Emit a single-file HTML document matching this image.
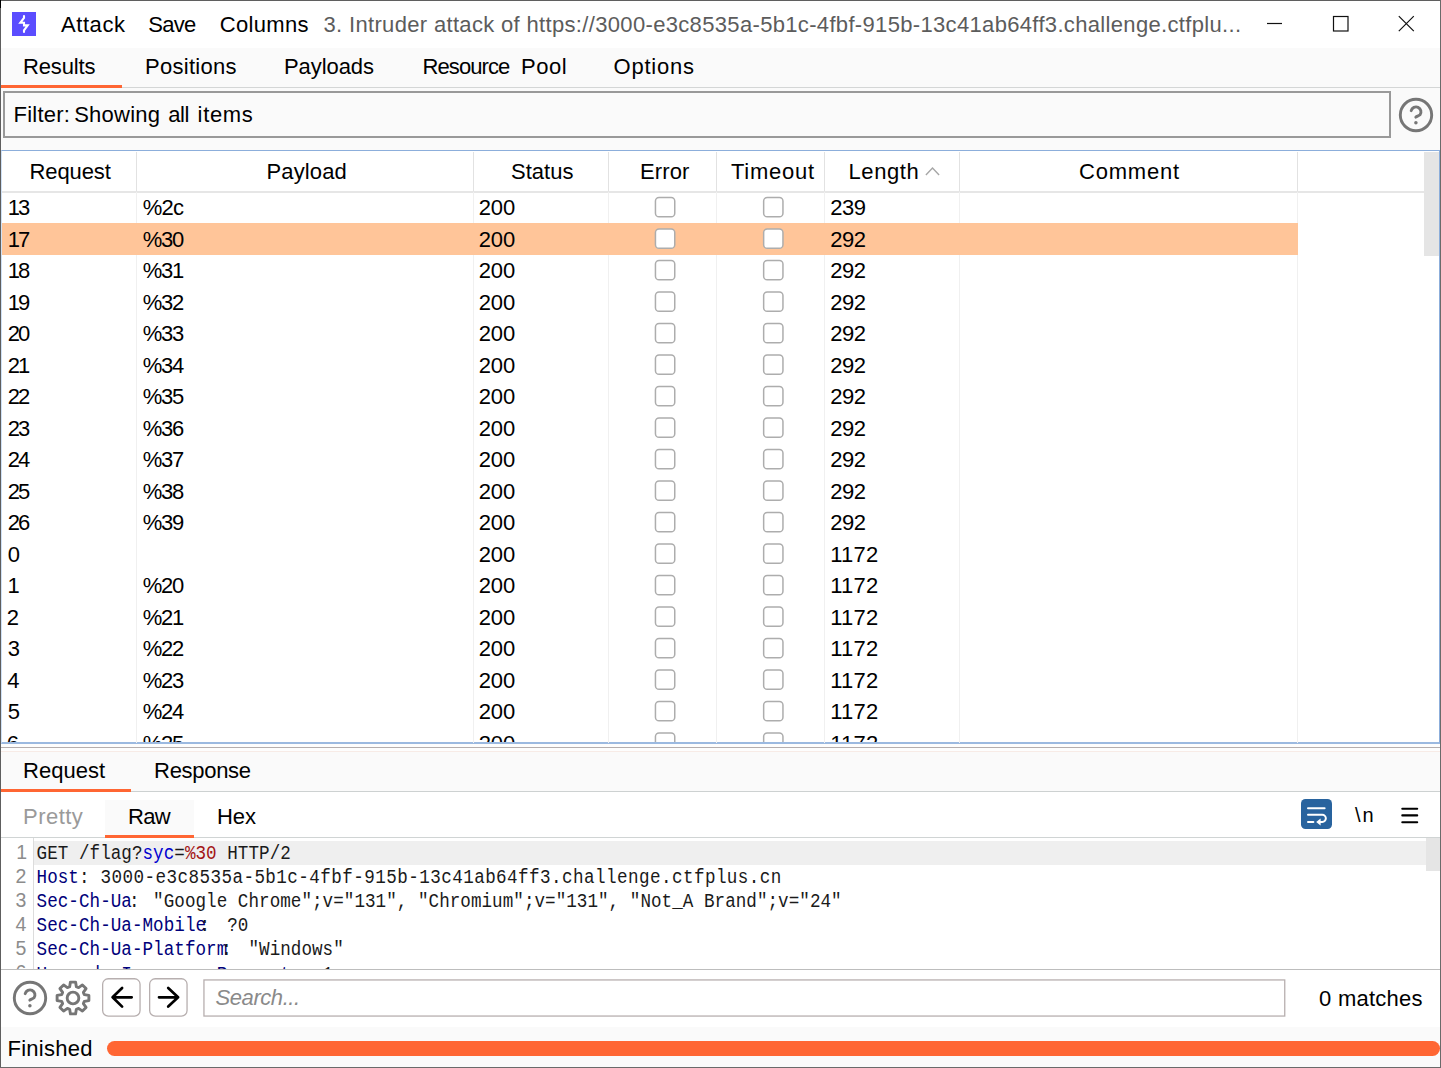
<!DOCTYPE html>
<html lang="en">
<head>
<meta charset="utf-8">
<title>3. Intruder attack</title>
<style>
html,body{margin:0;padding:0;}
body{width:1441px;height:1068px;overflow:hidden;background:#fafafa;position:relative;font-family:"Liberation Sans",sans-serif;color:#000;}
.a{position:absolute;}
.t{position:absolute;white-space:pre;line-height:1;font-family:"Liberation Sans",sans-serif;}
.vl{position:absolute;width:1px;background:#f0f0f0;top:192px;height:551px;}
.hl{position:absolute;width:1px;background:#e2e2e2;top:152px;height:39px;}
.code{position:absolute;left:36.6px;white-space:pre;font-family:"Liberation Mono",monospace;font-size:17.6px;line-height:24px;height:24px;letter-spacing:0.035px;transform:scaleY(1.17);transform-origin:0 18.5px;color:#1a1a1a;}
.code .h{color:#00007a;}
.code .k{color:#0000d0;}
.code .v{color:#a31515;}
.code .w{letter-spacing:0.43px;}
.code .cn{position:relative;}
</style>
</head>
<body>

<div class="a" style="left:0;top:0;width:1441px;height:48px;background:#fff;"></div>
<div class="a" style="left:12px;top:12px;width:24px;height:24px;background:#5b4dff;"><svg width="24" height="24" viewBox="0 0 24 24" style="display:block"><path d="M12 4V5.8L8.3 10.8H12V13.4H15.7L12 18.3V20" fill="none" stroke="#fff" stroke-width="2.1" stroke-linecap="round" stroke-linejoin="miter"/></svg></div>
<svg class="a" style="left:1260px;top:8px" width="170" height="32" viewBox="0 0 170 32"><g stroke="#111" stroke-width="1.2" fill="none"><path d="M7 15.5H22"/><rect x="73.5" y="8.5" width="14.5" height="14.5"/><path d="M138.8 8.2L153.8 23.2M153.8 8.2L138.8 23.2"/></g></svg>
<div class="a" style="left:1px;top:87px;width:1439px;height:1px;background:#d4d6d6;"></div>
<div class="a" style="left:1px;top:85px;width:121px;height:3px;background:#ff6633;"></div>
<div class="a" style="left:3px;top:91px;width:1384px;height:43px;border:2px solid #999;background:#fafafa;"></div>
<svg class="a" style="left:1395.70px;top:94.75px" width="40" height="40" viewBox="-20 -20 40 40"><circle cx="0" cy="0" r="15.7" fill="none" stroke="#767676" stroke-width="2.9"/><path d="M-4.8 -4.3A4.95 4.95 0 1 1 4 -0.2C2.8 1 1 1.2 -0.2 2.1" fill="none" stroke="#767676" stroke-width="2.9" stroke-linecap="round"/><circle cx="-0.1" cy="7.65" r="1.75" fill="#767676"/></svg>
<div class="a" style="left:1px;top:150px;width:1437px;height:591px;background:#fff;border:1px solid #8caedb;border-left-color:#cfe1f6;border-bottom:2px solid #9bb9e0;box-sizing:content-box;"></div>
<div class="a" style="left:2px;top:191px;width:1422px;height:1.5px;background:#e6e6e6;"></div>
<div class="a" style="left:2px;top:223px;width:1296px;height:32px;background:#ffc599;"></div>
<div class="hl" style="left:136px"></div><div class="vl" style="left:136px"></div>
<div class="hl" style="left:473px"></div><div class="vl" style="left:473px"></div>
<div class="hl" style="left:608px"></div><div class="vl" style="left:608px"></div>
<div class="hl" style="left:716px"></div><div class="vl" style="left:716px"></div>
<div class="hl" style="left:824px"></div><div class="vl" style="left:824px"></div>
<div class="hl" style="left:959px"></div><div class="vl" style="left:959px"></div>
<div class="hl" style="left:1297px"></div><div class="vl" style="left:1297px"></div>
<div class="a" style="left:2px;top:223px;width:1296px;height:32px;background:#ffc599;"></div>
<svg class="a" style="left:920px;top:160px" width="24" height="20" viewBox="920 160 24 20"><path d="M925.9 174.9L932.5 168.1L939.1 174.9" fill="none" stroke="#a6a6a6" stroke-width="1.4"/></svg>
<div class="a" style="left:1424px;top:152px;width:15px;height:104px;background:#e5e5e5;"></div>
<div class="a" style="left:2px;top:192px;width:1422px;height:550px;overflow:hidden;"><div class="a" style="left:-2px;top:-192px;width:1441px;height:800px;">
<svg class="a" style="left:0;top:0" width="1441" height="800" viewBox="0 0 1441 800"><g fill="#fff" stroke="#adadad" stroke-width="1.5"><rect x="655.45" y="197.45" width="19.3" height="19.3" rx="3.6"/><rect x="763.65" y="197.45" width="19.3" height="19.3" rx="3.6"/><rect x="655.45" y="228.95" width="19.3" height="19.3" rx="3.6"/><rect x="763.65" y="228.95" width="19.3" height="19.3" rx="3.6"/><rect x="655.45" y="260.45" width="19.3" height="19.3" rx="3.6"/><rect x="763.65" y="260.45" width="19.3" height="19.3" rx="3.6"/><rect x="655.45" y="291.95" width="19.3" height="19.3" rx="3.6"/><rect x="763.65" y="291.95" width="19.3" height="19.3" rx="3.6"/><rect x="655.45" y="323.45" width="19.3" height="19.3" rx="3.6"/><rect x="763.65" y="323.45" width="19.3" height="19.3" rx="3.6"/><rect x="655.45" y="354.95" width="19.3" height="19.3" rx="3.6"/><rect x="763.65" y="354.95" width="19.3" height="19.3" rx="3.6"/><rect x="655.45" y="386.45" width="19.3" height="19.3" rx="3.6"/><rect x="763.65" y="386.45" width="19.3" height="19.3" rx="3.6"/><rect x="655.45" y="417.95" width="19.3" height="19.3" rx="3.6"/><rect x="763.65" y="417.95" width="19.3" height="19.3" rx="3.6"/><rect x="655.45" y="449.45" width="19.3" height="19.3" rx="3.6"/><rect x="763.65" y="449.45" width="19.3" height="19.3" rx="3.6"/><rect x="655.45" y="480.95" width="19.3" height="19.3" rx="3.6"/><rect x="763.65" y="480.95" width="19.3" height="19.3" rx="3.6"/><rect x="655.45" y="512.45" width="19.3" height="19.3" rx="3.6"/><rect x="763.65" y="512.45" width="19.3" height="19.3" rx="3.6"/><rect x="655.45" y="543.95" width="19.3" height="19.3" rx="3.6"/><rect x="763.65" y="543.95" width="19.3" height="19.3" rx="3.6"/><rect x="655.45" y="575.45" width="19.3" height="19.3" rx="3.6"/><rect x="763.65" y="575.45" width="19.3" height="19.3" rx="3.6"/><rect x="655.45" y="606.95" width="19.3" height="19.3" rx="3.6"/><rect x="763.65" y="606.95" width="19.3" height="19.3" rx="3.6"/><rect x="655.45" y="638.45" width="19.3" height="19.3" rx="3.6"/><rect x="763.65" y="638.45" width="19.3" height="19.3" rx="3.6"/><rect x="655.45" y="669.95" width="19.3" height="19.3" rx="3.6"/><rect x="763.65" y="669.95" width="19.3" height="19.3" rx="3.6"/><rect x="655.45" y="701.45" width="19.3" height="19.3" rx="3.6"/><rect x="763.65" y="701.45" width="19.3" height="19.3" rx="3.6"/><rect x="655.45" y="732.95" width="19.3" height="19.3" rx="3.6"/><rect x="763.65" y="732.95" width="19.3" height="19.3" rx="3.6"/></g></svg>
<span class="t c" style="left:7.70px;top:196.50px;font-size:22px;letter-spacing:-1.935px;">13</span>
<span class="t c" style="left:142.80px;top:196.50px;font-size:22px;letter-spacing:-0.798px;">%2c</span>
<span class="t c" style="left:478.70px;top:196.50px;font-size:22px;letter-spacing:-0.085px;">200</span>
<span class="t c" style="left:830.20px;top:196.50px;font-size:22px;letter-spacing:-0.485px;">239</span>
<span class="t c" style="left:7.70px;top:228.50px;font-size:22px;letter-spacing:-1.935px;">17</span>
<span class="t c" style="left:142.80px;top:228.50px;font-size:22px;letter-spacing:-1.298px;">%30</span>
<span class="t c" style="left:478.70px;top:228.50px;font-size:22px;letter-spacing:-0.085px;">200</span>
<span class="t c" style="left:830.20px;top:228.50px;font-size:22px;letter-spacing:-0.485px;">292</span>
<span class="t c" style="left:7.70px;top:259.50px;font-size:22px;letter-spacing:-1.935px;">18</span>
<span class="t c" style="left:142.80px;top:259.50px;font-size:22px;letter-spacing:-1.298px;">%31</span>
<span class="t c" style="left:478.70px;top:259.50px;font-size:22px;letter-spacing:-0.085px;">200</span>
<span class="t c" style="left:830.20px;top:259.50px;font-size:22px;letter-spacing:-0.485px;">292</span>
<span class="t c" style="left:7.70px;top:291.50px;font-size:22px;letter-spacing:-1.935px;">19</span>
<span class="t c" style="left:142.80px;top:291.50px;font-size:22px;letter-spacing:-1.298px;">%32</span>
<span class="t c" style="left:478.70px;top:291.50px;font-size:22px;letter-spacing:-0.085px;">200</span>
<span class="t c" style="left:830.20px;top:291.50px;font-size:22px;letter-spacing:-0.485px;">292</span>
<span class="t c" style="left:7.70px;top:322.50px;font-size:22px;letter-spacing:-1.935px;">20</span>
<span class="t c" style="left:142.80px;top:322.50px;font-size:22px;letter-spacing:-1.298px;">%33</span>
<span class="t c" style="left:478.70px;top:322.50px;font-size:22px;letter-spacing:-0.085px;">200</span>
<span class="t c" style="left:830.20px;top:322.50px;font-size:22px;letter-spacing:-0.485px;">292</span>
<span class="t c" style="left:7.70px;top:354.50px;font-size:22px;letter-spacing:-1.935px;">21</span>
<span class="t c" style="left:142.80px;top:354.50px;font-size:22px;letter-spacing:-1.298px;">%34</span>
<span class="t c" style="left:478.70px;top:354.50px;font-size:22px;letter-spacing:-0.085px;">200</span>
<span class="t c" style="left:830.20px;top:354.50px;font-size:22px;letter-spacing:-0.485px;">292</span>
<span class="t c" style="left:7.70px;top:385.50px;font-size:22px;letter-spacing:-1.935px;">22</span>
<span class="t c" style="left:142.80px;top:385.50px;font-size:22px;letter-spacing:-1.298px;">%35</span>
<span class="t c" style="left:478.70px;top:385.50px;font-size:22px;letter-spacing:-0.085px;">200</span>
<span class="t c" style="left:830.20px;top:385.50px;font-size:22px;letter-spacing:-0.485px;">292</span>
<span class="t c" style="left:7.70px;top:417.50px;font-size:22px;letter-spacing:-1.935px;">23</span>
<span class="t c" style="left:142.80px;top:417.50px;font-size:22px;letter-spacing:-1.298px;">%36</span>
<span class="t c" style="left:478.70px;top:417.50px;font-size:22px;letter-spacing:-0.085px;">200</span>
<span class="t c" style="left:830.20px;top:417.50px;font-size:22px;letter-spacing:-0.485px;">292</span>
<span class="t c" style="left:7.70px;top:448.50px;font-size:22px;letter-spacing:-1.935px;">24</span>
<span class="t c" style="left:142.80px;top:448.50px;font-size:22px;letter-spacing:-1.298px;">%37</span>
<span class="t c" style="left:478.70px;top:448.50px;font-size:22px;letter-spacing:-0.085px;">200</span>
<span class="t c" style="left:830.20px;top:448.50px;font-size:22px;letter-spacing:-0.485px;">292</span>
<span class="t c" style="left:7.70px;top:480.50px;font-size:22px;letter-spacing:-1.935px;">25</span>
<span class="t c" style="left:142.80px;top:480.50px;font-size:22px;letter-spacing:-1.298px;">%38</span>
<span class="t c" style="left:478.70px;top:480.50px;font-size:22px;letter-spacing:-0.085px;">200</span>
<span class="t c" style="left:830.20px;top:480.50px;font-size:22px;letter-spacing:-0.485px;">292</span>
<span class="t c" style="left:7.70px;top:511.50px;font-size:22px;letter-spacing:-1.935px;">26</span>
<span class="t c" style="left:142.80px;top:511.50px;font-size:22px;letter-spacing:-1.298px;">%39</span>
<span class="t c" style="left:478.70px;top:511.50px;font-size:22px;letter-spacing:-0.085px;">200</span>
<span class="t c" style="left:830.20px;top:511.50px;font-size:22px;letter-spacing:-0.485px;">292</span>
<span class="t c" style="left:7.80px;top:543.50px;font-size:22px;">0</span>
<span class="t c" style="left:478.70px;top:543.50px;font-size:22px;letter-spacing:-0.085px;">200</span>
<span class="t c" style="left:830.20px;top:543.50px;font-size:22px;letter-spacing:0.242px;">1172</span>
<span class="t c" style="left:7.60px;top:574.50px;font-size:22px;">1</span>
<span class="t c" style="left:142.80px;top:574.50px;font-size:22px;letter-spacing:-1.298px;">%20</span>
<span class="t c" style="left:478.70px;top:574.50px;font-size:22px;letter-spacing:-0.085px;">200</span>
<span class="t c" style="left:830.20px;top:574.50px;font-size:22px;letter-spacing:0.242px;">1172</span>
<span class="t c" style="left:6.80px;top:606.50px;font-size:22px;">2</span>
<span class="t c" style="left:142.80px;top:606.50px;font-size:22px;letter-spacing:-1.298px;">%21</span>
<span class="t c" style="left:478.70px;top:606.50px;font-size:22px;letter-spacing:-0.085px;">200</span>
<span class="t c" style="left:830.20px;top:606.50px;font-size:22px;letter-spacing:0.242px;">1172</span>
<span class="t c" style="left:7.80px;top:637.50px;font-size:22px;">3</span>
<span class="t c" style="left:142.80px;top:637.50px;font-size:22px;letter-spacing:-1.298px;">%22</span>
<span class="t c" style="left:478.70px;top:637.50px;font-size:22px;letter-spacing:-0.085px;">200</span>
<span class="t c" style="left:830.20px;top:637.50px;font-size:22px;letter-spacing:0.242px;">1172</span>
<span class="t c" style="left:7.20px;top:669.50px;font-size:22px;">4</span>
<span class="t c" style="left:142.80px;top:669.50px;font-size:22px;letter-spacing:-1.298px;">%23</span>
<span class="t c" style="left:478.70px;top:669.50px;font-size:22px;letter-spacing:-0.085px;">200</span>
<span class="t c" style="left:830.20px;top:669.50px;font-size:22px;letter-spacing:0.242px;">1172</span>
<span class="t c" style="left:7.80px;top:700.50px;font-size:22px;">5</span>
<span class="t c" style="left:142.80px;top:700.50px;font-size:22px;letter-spacing:-1.298px;">%24</span>
<span class="t c" style="left:478.70px;top:700.50px;font-size:22px;letter-spacing:-0.085px;">200</span>
<span class="t c" style="left:830.20px;top:700.50px;font-size:22px;letter-spacing:0.242px;">1172</span>
<span class="t c" style="left:6.80px;top:732.50px;font-size:22px;">6</span>
<span class="t c" style="left:142.80px;top:732.50px;font-size:22px;letter-spacing:-1.298px;">%25</span>
<span class="t c" style="left:478.70px;top:732.50px;font-size:22px;letter-spacing:-0.085px;">200</span>
<span class="t c" style="left:830.20px;top:732.50px;font-size:22px;letter-spacing:0.242px;">1172</span>
</div></div>
<span class="t" style="left:61.00px;top:13.50px;font-size:22px;letter-spacing:0.573px;">Attack</span>
<span class="t" style="left:148.30px;top:13.50px;font-size:22px;letter-spacing:-0.736px;">Save</span>
<span class="t" style="left:219.80px;top:13.50px;font-size:22px;letter-spacing:0.315px;">Columns</span>
<span class="t" style="left:323.50px;top:13.50px;font-size:22px;letter-spacing:0.334px;color:#5c5c5c;">3. Intruder attack of https://3000-e3c8535a-5b1c-4fbf-915b-13c41ab64ff3.challenge.ctfplu...</span>
<span class="t" style="left:23.00px;top:55.50px;font-size:22px;letter-spacing:-0.143px;">Results</span>
<span class="t" style="left:145.00px;top:55.50px;font-size:22px;letter-spacing:0.279px;">Positions</span>
<span class="t" style="left:284.00px;top:55.50px;font-size:22px;letter-spacing:-0.072px;">Payloads</span>
<span class="t" style="left:422.60px;top:55.50px;font-size:22px;letter-spacing:-0.931px;">Resource</span>
<span class="t" style="left:521.00px;top:55.50px;font-size:22px;letter-spacing:0.518px;">Pool</span>
<span class="t" style="left:613.50px;top:55.50px;font-size:22px;letter-spacing:0.780px;">Options</span>
<span class="t" style="left:13.50px;top:103.50px;font-size:22px;letter-spacing:0.235px;">Filter:</span>
<span class="t" style="left:74.20px;top:103.50px;font-size:22px;letter-spacing:0.241px;">Showing</span>
<span class="t" style="left:168.20px;top:103.50px;font-size:22px;letter-spacing:-0.362px;">all</span>
<span class="t" style="left:197.60px;top:103.50px;font-size:22px;letter-spacing:0.660px;">items</span>
<span class="t" style="left:29.60px;top:160.50px;font-size:22px;letter-spacing:-0.122px;">Request</span>
<span class="t" style="left:266.50px;top:160.50px;font-size:22px;letter-spacing:0.122px;">Payload</span>
<span class="t" style="left:511.00px;top:160.50px;font-size:22px;letter-spacing:0.026px;">Status</span>
<span class="t" style="left:640.00px;top:160.50px;font-size:22px;letter-spacing:0.110px;">Error</span>
<span class="t" style="left:731.00px;top:160.50px;font-size:22px;letter-spacing:0.743px;">Timeout</span>
<span class="t" style="left:848.50px;top:160.50px;font-size:22px;letter-spacing:0.589px;">Length</span>
<span class="t" style="left:1079.00px;top:160.50px;font-size:22px;letter-spacing:0.792px;">Comment</span>
<div class="a" style="left:1px;top:744px;width:1439px;height:7.5px;background:#fdfdfd;"></div>
<div class="a" style="left:1px;top:747px;width:1439px;height:1px;background:#b4aeae;"></div>
<div class="a" style="left:1px;top:751px;width:1439px;height:1px;background:#f7ebe6;"></div>
<div class="a" style="left:1px;top:791px;width:1439px;height:1px;background:#cdd1d1;"></div>
<div class="a" style="left:1px;top:789px;width:130px;height:3px;background:#ff6633;"></div>
<div class="a" style="left:1px;top:792px;width:1439px;height:46px;background:#fff;"></div>
<div class="a" style="left:105px;top:800px;width:89px;height:38px;background:#fafafa;"></div>
<div class="a" style="left:1px;top:837px;width:1439px;height:1px;background:#d0d4d4;"></div>
<div class="a" style="left:105px;top:835px;width:89px;height:3px;background:#ff6633;"></div>
<svg class="a" style="left:1301px;top:799px" width="31" height="30" viewBox="0 0 31 30"><rect x="0" y="0" width="31" height="30" rx="4.5" fill="#28639e"/><g fill="none" stroke="#fff" stroke-width="2" stroke-linecap="round"><path d="M7 9.2H23.6"/><path d="M7 15.8H21.3a3.55 3.55 0 0 1 0 7.1H18"/><path d="M7 22.9H12.4"/></g><path d="M15.2 22.9L19.6 19.4V26.4Z" fill="#fff"/></svg>
<svg class="a" style="left:1399px;top:804px" width="22" height="22" viewBox="0 0 22 22"><g stroke="#000" stroke-width="2.1" stroke-linecap="round"><path d="M3.3 4.7H18.2M3.3 11.4H18.2M3.3 18.2H18.2"/></g></svg>
<div class="a" style="left:1px;top:838px;width:1439px;height:131px;background:#fff;overflow:hidden;">
<div class="a" style="left:32px;top:3px;width:1393px;height:23.7px;background:#efefef;"></div>
<div class="a" style="left:32px;top:0;width:1px;height:131px;background:#dcdcdc;"></div>
<div class="a" style="left:1424.5px;top:0;width:14.5px;height:33px;background:#e5e5e5;"></div>
</div>
<div class="a" style="left:0;top:838px;width:1424px;height:131px;overflow:hidden;"><div class="a" style="left:0;top:-838px;width:1441px;height:1068px;">
<div class="code" style="top:841.8px">GET /flag?<span class="k">syc</span>=<span class="v">%30</span> HTTP/2</div>
<div class="code" style="top:865.8px"><span class="h">Host</span>:<span class="w"> 3000-e3c8535a-5b1c-4fbf-915b-13c41ab64ff3.challenge.ctfplus.cn</span></div>
<div class="code" style="top:889.8px"><span class="h">Sec-Ch-Ua</span><span class="cn" style="left:-3px">:</span> "Google Chrome";v="131", "Chromium";v="131", "Not_A Brand";v="24"</div>
<div class="code" style="top:913.8px"><span class="h">Sec-Ch-Ua-Mobile</span><span class="cn" style="left:-6.5px">:</span> ?0</div>
<div class="code" style="top:937.8px"><span class="h">Sec-Ch-Ua-Platform</span><span class="cn" style="left:-6px">:</span> "Windows"</div>
<div class="code" style="top:963.0px"><span class="h">Upgrade-Insecure-Requests</span><span class="cn" style="left:-4px">:</span> 1</div>
<span class="t ln" style="left:16.30px;top:842.65px;font-size:19.5px;color:#8c8c8c;">1</span>
<span class="t ln" style="left:15.50px;top:866.65px;font-size:19.5px;color:#8c8c8c;">2</span>
<span class="t ln" style="left:15.50px;top:890.65px;font-size:19.5px;color:#8c8c8c;">3</span>
<span class="t ln" style="left:15.50px;top:914.65px;font-size:19.5px;color:#8c8c8c;">4</span>
<span class="t ln" style="left:15.50px;top:938.65px;font-size:19.5px;color:#8c8c8c;">5</span>
<span class="t ln" style="left:15.50px;top:962.65px;font-size:19.5px;color:#8c8c8c;">6</span>
</div></div>
<div class="a" style="left:1px;top:969px;width:1439px;height:58px;background:#fff;"></div>
<div class="a" style="left:1px;top:969px;width:1439px;height:1px;background:#bdbdbd;"></div>
<svg class="a" style="left:9.65px;top:977.95px" width="40" height="40" viewBox="-20 -20 40 40"><circle cx="0" cy="0" r="15.7" fill="none" stroke="#767676" stroke-width="2.9"/><path d="M-4.8 -4.3A4.95 4.95 0 1 1 4 -0.2C2.8 1 1 1.2 -0.2 2.1" fill="none" stroke="#767676" stroke-width="2.9" stroke-linecap="round"/><circle cx="-0.1" cy="7.65" r="1.75" fill="#767676"/></svg>
<svg class="a" style="left:53px;top:978.10px" width="40" height="40" viewBox="-20 -20 40 40"><path d="M-3.35 -11.31L-2.57 -15.89L2.57 -15.89L3.35 -11.31L5.63 -10.37L9.42 -13.06L13.06 -9.42L10.37 -5.63L11.31 -3.35L15.89 -2.57L15.89 2.57L11.31 3.35L10.37 5.63L13.06 9.42L9.42 13.06L5.63 10.37L3.35 11.31L2.57 15.89L-2.57 15.89L-3.35 11.31L-5.63 10.37L-9.42 13.06L-13.06 9.42L-10.37 5.63L-11.31 3.35L-15.89 2.57L-15.89 -2.57L-11.31 -3.35L-10.37 -5.63L-13.06 -9.42L-9.42 -13.06L-5.63 -10.37Z" fill="none" stroke="#767676" stroke-width="2.9" stroke-linejoin="round"/><circle cx="0" cy="0" r="5.85" fill="none" stroke="#767676" stroke-width="2.9"/></svg>
<svg class="a" style="left:100.1px;top:976px" width="44" height="44" viewBox="-2 -2.1 44 44"><rect x="0.65" y="0.65" width="37.4" height="37.4" rx="5.6" fill="#fff" stroke="#b7afaf" stroke-width="1.3"/></svg>
<svg class="a" style="left:147.2px;top:976px" width="44" height="44" viewBox="-2 -2.1 44 44"><rect x="0.65" y="0.65" width="37.4" height="37.4" rx="5.6" fill="#fff" stroke="#b7afaf" stroke-width="1.3"/></svg>
<svg class="a" style="left:102px;top:978px" width="40" height="40" viewBox="102 978 40 40"><path d="M131.7 997.3H112.6M122.1 988L112.6 997.3L122.1 1006.6" fill="none" stroke="#000" stroke-width="2.7" stroke-linecap="round" stroke-linejoin="round"/></svg>
<svg class="a" style="left:149px;top:978px" width="40" height="40" viewBox="149 978 40 40"><path d="M159 997.3H178.1M168.2 988L178.1 997.3L168.2 1006.6" fill="none" stroke="#000" stroke-width="2.7" stroke-linecap="round" stroke-linejoin="round"/></svg>
<svg class="a" style="left:200px;top:975px" width="1090" height="46" viewBox="200 975 1090 46"><rect x="203.95" y="979.95" width="1080.8" height="36.1" fill="#fff" stroke="#b7afaf" stroke-width="1.3"/></svg>
<div class="a" style="left:107px;top:1041px;width:1333px;height:15.2px;border-radius:8px;background:#ff6633;"></div>
<span class="t" style="left:23.10px;top:759.50px;font-size:22px;letter-spacing:0.012px;">Request</span>
<span class="t" style="left:154.10px;top:759.50px;font-size:22px;letter-spacing:-0.304px;">Response</span>
<span class="t" style="left:23.10px;top:805.50px;font-size:22px;letter-spacing:0.448px;color:#9a9a9a;">Pretty</span>
<span class="t" style="left:128.10px;top:805.50px;font-size:22px;letter-spacing:-0.762px;">Raw</span>
<span class="t" style="left:217.10px;top:805.50px;font-size:22px;letter-spacing:-0.112px;">Hex</span>
<span class="t" style="left:1355.00px;top:805.20px;font-size:20px;letter-spacing:1.943px;">\n</span>
<span class="t" style="left:215.60px;top:986.50px;font-size:22px;letter-spacing:-0.441px;color:#8a8a8a;font-style:italic;">Search...</span>
<span class="t" style="left:1319.10px;top:987.50px;font-size:22px;letter-spacing:0.251px;">0 matches</span>
<span class="t" style="left:7.50px;top:1037.50px;font-size:22px;letter-spacing:0.254px;">Finished</span>
<div class="a" style="left:0;top:0;width:1441px;height:1px;background:#5f5f5f;"></div>
<div class="a" style="left:0;top:0;width:1px;height:1068px;background:#5e5e5e;"></div>
<div class="a" style="left:0;top:0;width:1px;height:8px;background:#000;"></div>
<div class="a" style="left:1440px;top:0;width:1px;height:1068px;background:#6a6a6a;"></div>
<div class="a" style="left:0;top:1067px;width:1441px;height:1px;background:#6a6a6a;"></div>
</body>
</html>
